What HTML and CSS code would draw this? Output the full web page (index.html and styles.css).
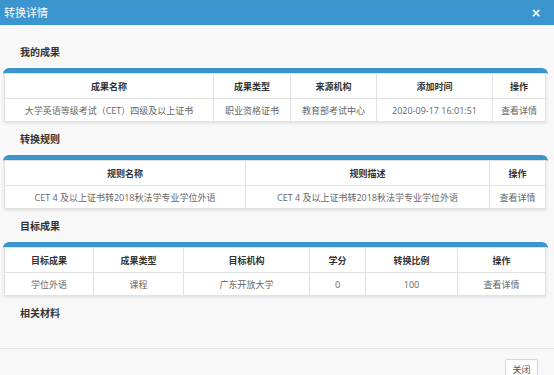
FILE: index.html
```html
<!DOCTYPE html>
<html lang="zh-CN">

<head>
    <meta charset="UTF-8">
    <title>转换详情</title>
    <link rel="stylesheet" href="styles.css">
</head>

<body>
    <div class="dialog">
        <div class="dialog-header">
            <span class="dialog-title">转换详情</span>
            <span class="dialog-close">&times;</span>
        </div>

        <div class="dialog-body">
            <div class="section-title">我的成果</div>
            <div class="panel">
                <table>
                    <colgroup>
                        <col style="width:209px">
                        <col style="width:77px">
                        <col style="width:86px">
                        <col style="width:116px">
                        <col>
                    </colgroup>
                    <thead>
                        <tr>
                            <th>成果名称</th>
                            <th>成果类型</th>
                            <th>来源机构</th>
                            <th>添加时间</th>
                            <th>操作</th>
                        </tr>
                    </thead>
                    <tbody>
                        <tr>
                            <td>大学英语等级考试（CET）四级及以上证书</td>
                            <td>职业资格证书</td>
                            <td>教育部考试中心</td>
                            <td>2020-09-17 16:01:51</td>
                            <td>查看详情</td>
                        </tr>
                    </tbody>
                </table>
            </div>

            <div class="section-title">转换规则</div>
            <div class="panel">
                <table>
                    <colgroup>
                        <col style="width:241px">
                        <col style="width:244px">
                        <col>
                    </colgroup>
                    <thead>
                        <tr>
                            <th>规则名称</th>
                            <th>规则描述</th>
                            <th>操作</th>
                        </tr>
                    </thead>
                    <tbody>
                        <tr>
                            <td>CET 4 及以上证书转2018秋法学专业学位外语</td>
                            <td>CET 4 及以上证书转2018秋法学专业学位外语</td>
                            <td>查看详情</td>
                        </tr>
                    </tbody>
                </table>
            </div>

            <div class="section-title">目标成果</div>
            <div class="panel">
                <table>
                    <colgroup>
                        <col style="width:89px">
                        <col style="width:90px">
                        <col style="width:126px">
                        <col style="width:56px">
                        <col style="width:92px">
                        <col>
                    </colgroup>
                    <thead>
                        <tr>
                            <th>目标成果</th>
                            <th>成果类型</th>
                            <th>目标机构</th>
                            <th>学分</th>
                            <th>转换比例</th>
                            <th>操作</th>
                        </tr>
                    </thead>
                    <tbody>
                        <tr>
                            <td>学位外语</td>
                            <td>课程</td>
                            <td>广东开放大学</td>
                            <td>0</td>
                            <td>100</td>
                            <td>查看详情</td>
                        </tr>
                    </tbody>
                </table>
            </div>

            <div class="section-title">相关材料</div>
        </div>

        <div class="dialog-footer">
            <button class="btn">关闭</button>
        </div>
    </div>
</body>

</html>
```

FILE: styles.css
```css
body {
    margin: 0;
    padding: 0;
    font-family: "Open Sans", "Noto Sans CJK SC", sans-serif;
    background-color: #f8f8f8;
    color: #555;
}

.dialog {
    width: 554px;
    height: 375px;
    overflow: hidden;
}

.dialog-header {
    height: 25px;
    background-color: #3b96cf;
    color: #fff;
    display: flex;
    align-items: center;
    justify-content: space-between;
    padding: 0 13px 0 4px;
}

.dialog-title {
    font-size: 11px;
    line-height: 14px;
}

.dialog-close {
    font-family: "DejaVu Sans", sans-serif;
    font-size: 12px;
    font-weight: bold;
    line-height: 14px;
}

.dialog-body {
    padding: 20px 6px 0 3px;
    height: 324px;
    border-bottom: 1px solid #e6e6e6;
    box-sizing: border-box;
}

.section-title {
    font-size: 10px;
    font-weight: bold;
    color: #333;
    line-height: 14px;
    margin: 0 0 9px 17px;
}

.panel {
    border-top: 5px solid #3b96cf;
    border-radius: 6px 6px 0 0;
    padding: 0 2px 0 1px;
    margin-bottom: 10px;
}

table {
    width: 100%;
    border-collapse: collapse;
    table-layout: fixed;
    background-color: #fff;
    box-shadow: 0 1px 3px rgba(0, 0, 0, 0.12);
}

th,
td {
    border: 1px solid #e2e2e2;
    text-align: center;
    font-size: 9px;
    white-space: nowrap;
    overflow: hidden;
    padding: 0;
}

th {
    height: 24px;
    color: #333;
    font-weight: bold;
}

td {
    height: 22px;
    color: #666;
}

.dialog-footer {
    display: flex;
    justify-content: flex-end;
    padding: 10px 16px 0 0;
}

.btn {
    width: 33px;
    height: 20px;
    padding: 0;
    font-family: "Open Sans", "Noto Sans CJK SC", sans-serif;
    font-size: 9px;
    color: #555;
    background-color: #fff;
    border: 1px solid #d6d6d6;
    border-radius: 2px;
}
```
